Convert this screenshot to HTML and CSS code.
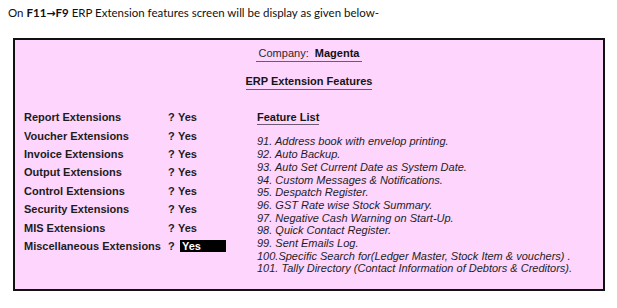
FILE: index.html
```html
<!DOCTYPE html>
<html>
<head>
<meta charset="utf-8">
<link rel="stylesheet" href="styles.css">
</head>
<body>
<p class="intro">On <b>F11</b><span class="arrow">&#x2192;</span><b>F9</b> ERP Extension features screen will be display as given below-</p>
<div class="screen">
  <div class="title-row"><span class="company">Company:&nbsp; <b>Magenta</b></span></div>
  <div class="title-row title2"><span class="heading">ERP Extension Features</span></div>
  <div class="body">
    <div class="ext-list">
      <div class="ext-row"><span class="ext-label">Report Extensions</span><span class="q">?</span><span class="val">Yes</span></div>
      <div class="ext-row"><span class="ext-label">Voucher Extensions</span><span class="q">?</span><span class="val">Yes</span></div>
      <div class="ext-row"><span class="ext-label">Invoice Extensions</span><span class="q">?</span><span class="val">Yes</span></div>
      <div class="ext-row"><span class="ext-label">Output Extensions</span><span class="q">?</span><span class="val">Yes</span></div>
      <div class="ext-row"><span class="ext-label">Control Extensions</span><span class="q">?</span><span class="val">Yes</span></div>
      <div class="ext-row"><span class="ext-label">Security Extensions</span><span class="q">?</span><span class="val">Yes</span></div>
      <div class="ext-row"><span class="ext-label">MIS Extensions</span><span class="q">?</span><span class="val">Yes</span></div>
      <div class="ext-row"><span class="ext-label">Miscellaneous Extensions</span><span class="q">?</span><span class="val selected">Yes</span></div>
    </div>
    <div class="features">
      <div class="feat-title"><span>Feature List</span></div>
      <ul class="feat-list">
        <li>91. Address book with envelop printing.</li>
        <li>92. Auto Backup.</li>
        <li>93. Auto Set Current Date as System Date.</li>
        <li>94. Custom Messages &amp; Notifications.</li>
        <li>95. Despatch Register.</li>
        <li>96. GST Rate wise Stock Summary.</li>
        <li>97. Negative Cash Warning on Start-Up.</li>
        <li>98. Quick Contact Register.</li>
        <li>99. Sent Emails Log.</li>
        <li>100.Specific Search for(Ledger Master, Stock Item &amp; vouchers) .</li>
        <li>101. Tally Directory (Contact Information of Debtors &amp; Creditors).</li>
      </ul>
    </div>
  </div>
</div>
</body>
</html>
```
FILE: styles.css
```css
html, body {
  margin: 0;
  padding: 0;
  background: #ffffff;
}
body {
  padding: 6px 0 0 8px;
}
.intro {
  margin: 0;
  font-family: Lato, "Open Sans", sans-serif;
  font-size: 11.5px;
  line-height: 14px;
  color: #111;
}
.intro b {
  font-weight: 700;
}
.arrow {
  font-family: "DejaVu Sans", sans-serif;
  font-weight: bold;
  font-size: 11px;
}
.screen {
  margin: 17px 0 0 5px;
  width: 588px;
  height: 249px;
  border: 2px solid #111;
  background: #fdd5fd;
  box-sizing: content-box;
  font-family: "Liberation Sans", Arial, sans-serif;
  font-size: 11px;
  color: #151515;
  display: flex;
  flex-direction: column;
}
.title-row {
  display: flex;
  justify-content: center;
  padding-top: 6px;
  line-height: 14px;
}
.company {
  padding: 0 3px 1px;
  border-bottom: 1px solid #6d5a72;
  color: #2a2a2a;
}
.company b {
  color: #111;
}
.title2 {
  padding-top: 12px;
}
.heading {
  font-weight: bold;
  padding-bottom: 1px;
  border-bottom: 1px solid #6d5a72;
}
.body {
  display: grid;
  grid-template-columns: 233px 1fr;
  padding: 18px 0 0 9px;
}
.ext-row {
  display: flex;
  align-items: center;
  height: 18.43px;
  font-weight: bold;
  color: #1c1c1c;
}
.ext-label {
  width: 144px;
}
.q {
  width: 10px;
}
.val {
  display: inline-block;
  padding: 0 2px;
  margin-left: -2px;
  line-height: 12px;
  width: 42px;
}
.val.selected {
  background: #000;
  color: #fff;
  margin-left: 2px;
}
.features {
  display: flex;
  flex-direction: column;
}
.feat-title {
  line-height: 18.43px;
  font-weight: bold;
}
.feat-title span {
  border-bottom: 1px solid #6d5a72;
  padding-bottom: 1px;
}
.feat-list {
  list-style: none;
  margin: 9px 0 0 0;
  padding: 0;
  font-style: italic;
}
.feat-list li {
  line-height: 12.7px;
  color: #1e1e1e;
}
```
